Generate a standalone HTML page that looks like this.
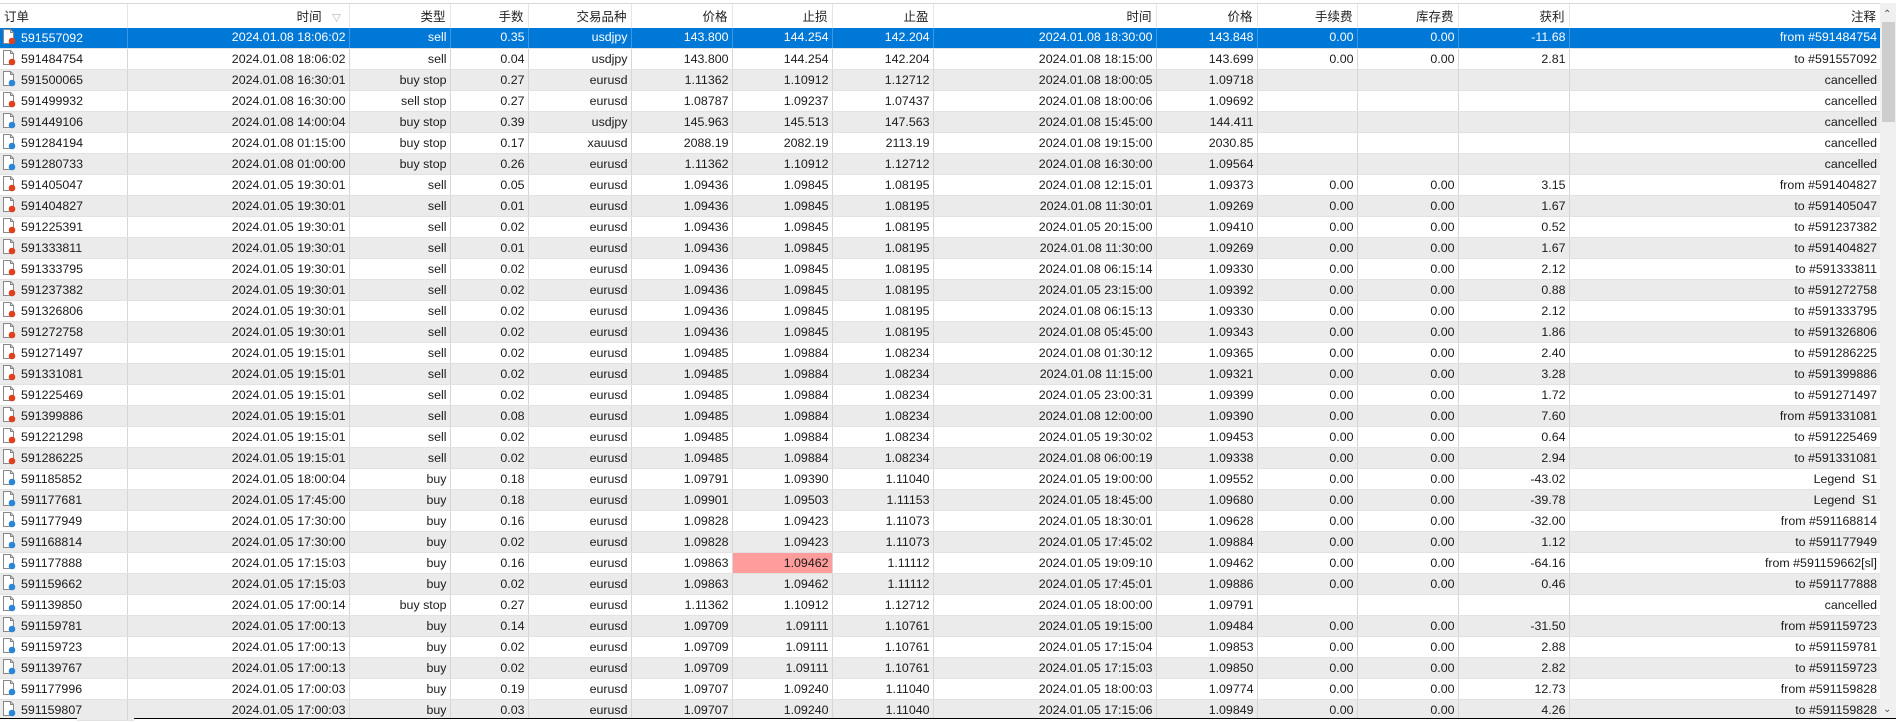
<!DOCTYPE html>
<html><head><meta charset="utf-8">
<style>
*{margin:0;padding:0;box-sizing:border-box}
body{width:1896px;height:722px;overflow:hidden;background:#fff;font-family:"Liberation Sans","Noto Sans CJK SC",sans-serif;font-size:12.4px;color:#1a1a1a;position:relative}
table{position:absolute;left:0;top:3px;border-collapse:collapse;table-layout:fixed;width:1880px}
th{height:24px;font-weight:normal;font-size:12.5px;text-align:right;padding:0 4px;border-left:1px solid #e6e6e6;border-top:1px solid #d8d8d8;color:#222;white-space:nowrap}
th:first-child{text-align:left;border-left:none;padding-left:4px}
td{height:21px;line-height:19px;text-align:right;padding:0 3px;border-left:1px solid #d6d6d6;border-bottom:1px solid #e2e2e2;white-space:nowrap;overflow:hidden}
td:first-child{text-align:left;border-left:none;padding-left:1px}
tr:nth-child(even) td{background:#ebebeb}
tr.sel td{background:#0078d7;color:#fff;border-left-color:#3d96e0}
td.pk{background:#ff9c9c!important}
.ic{display:inline-block;width:16px;height:17px;vertical-align:-3px;margin-right:4px}
.sb{position:absolute;left:1880px;top:3px;width:16px;height:716px;background:#f0f0f0}
.th{position:absolute;left:1882px;top:22px;width:13px;height:100px;background:#cdcdcd}
.bot{position:absolute;top:718px;height:4px;border-top:1px solid #000;background:#fff}
</style></head><body>
<svg width="0" height="0" style="position:absolute"><defs>
<symbol id="r" viewBox="0 0 16 17"><path d="M2.5 1.5h7l3 3v11h-10z" fill="#fff" stroke="#888"/><path d="M9.5 1.5v3h3" fill="none" stroke="#888"/><circle cx="11" cy="13" r="3.3" fill="#e0401c"/></symbol>
<symbol id="b" viewBox="0 0 16 17"><path d="M2.5 1.5h7l3 3v11h-10z" fill="#fff" stroke="#888"/><path d="M9.5 1.5v3h3" fill="none" stroke="#888"/><circle cx="11" cy="13" r="3.3" fill="#2a86d8"/></symbol>
</defs></svg>
<table>
<colgroup><col style="width:127px"><col style="width:222px"><col style="width:101px"><col style="width:78px"><col style="width:103px"><col style="width:101px"><col style="width:100px"><col style="width:101px"><col style="width:223px"><col style="width:101px"><col style="width:100px"><col style="width:101px"><col style="width:111px"><col style="width:311px"></colgroup>
<tr><th>订单</th><th>时间 &nbsp; <span style="font-size:9px;color:#888">▽</span>&nbsp;</th><th>类型</th><th>手数</th><th>交易品种</th><th>价格</th><th>止损</th><th>止盈</th><th>时间</th><th>价格</th><th>手续费</th><th>库存费</th><th>获利</th><th>注释</th></tr>
<tr class="sel"><td><svg class="ic"><use href="#r"/></svg>591557092</td><td>2024.01.08 18:06:02</td><td>sell</td><td>0.35</td><td>usdjpy</td><td>143.800</td><td>144.254</td><td>142.204</td><td>2024.01.08 18:30:00</td><td>143.848</td><td>0.00</td><td>0.00</td><td>-11.68</td><td>from #591484754</td></tr>
<tr><td><svg class="ic"><use href="#r"/></svg>591484754</td><td>2024.01.08 18:06:02</td><td>sell</td><td>0.04</td><td>usdjpy</td><td>143.800</td><td>144.254</td><td>142.204</td><td>2024.01.08 18:15:00</td><td>143.699</td><td>0.00</td><td>0.00</td><td>2.81</td><td>to #591557092</td></tr>
<tr><td><svg class="ic"><use href="#b"/></svg>591500065</td><td>2024.01.08 16:30:01</td><td>buy stop</td><td>0.27</td><td>eurusd</td><td>1.11362</td><td>1.10912</td><td>1.12712</td><td>2024.01.08 18:00:05</td><td>1.09718</td><td></td><td></td><td></td><td>cancelled</td></tr>
<tr><td><svg class="ic"><use href="#r"/></svg>591499932</td><td>2024.01.08 16:30:00</td><td>sell stop</td><td>0.27</td><td>eurusd</td><td>1.08787</td><td>1.09237</td><td>1.07437</td><td>2024.01.08 18:00:06</td><td>1.09692</td><td></td><td></td><td></td><td>cancelled</td></tr>
<tr><td><svg class="ic"><use href="#b"/></svg>591449106</td><td>2024.01.08 14:00:04</td><td>buy stop</td><td>0.39</td><td>usdjpy</td><td>145.963</td><td>145.513</td><td>147.563</td><td>2024.01.08 15:45:00</td><td>144.411</td><td></td><td></td><td></td><td>cancelled</td></tr>
<tr><td><svg class="ic"><use href="#b"/></svg>591284194</td><td>2024.01.08 01:15:00</td><td>buy stop</td><td>0.17</td><td>xauusd</td><td>2088.19</td><td>2082.19</td><td>2113.19</td><td>2024.01.08 19:15:00</td><td>2030.85</td><td></td><td></td><td></td><td>cancelled</td></tr>
<tr><td><svg class="ic"><use href="#b"/></svg>591280733</td><td>2024.01.08 01:00:00</td><td>buy stop</td><td>0.26</td><td>eurusd</td><td>1.11362</td><td>1.10912</td><td>1.12712</td><td>2024.01.08 16:30:00</td><td>1.09564</td><td></td><td></td><td></td><td>cancelled</td></tr>
<tr><td><svg class="ic"><use href="#r"/></svg>591405047</td><td>2024.01.05 19:30:01</td><td>sell</td><td>0.05</td><td>eurusd</td><td>1.09436</td><td>1.09845</td><td>1.08195</td><td>2024.01.08 12:15:01</td><td>1.09373</td><td>0.00</td><td>0.00</td><td>3.15</td><td>from #591404827</td></tr>
<tr><td><svg class="ic"><use href="#r"/></svg>591404827</td><td>2024.01.05 19:30:01</td><td>sell</td><td>0.01</td><td>eurusd</td><td>1.09436</td><td>1.09845</td><td>1.08195</td><td>2024.01.08 11:30:01</td><td>1.09269</td><td>0.00</td><td>0.00</td><td>1.67</td><td>to #591405047</td></tr>
<tr><td><svg class="ic"><use href="#r"/></svg>591225391</td><td>2024.01.05 19:30:01</td><td>sell</td><td>0.02</td><td>eurusd</td><td>1.09436</td><td>1.09845</td><td>1.08195</td><td>2024.01.05 20:15:00</td><td>1.09410</td><td>0.00</td><td>0.00</td><td>0.52</td><td>to #591237382</td></tr>
<tr><td><svg class="ic"><use href="#r"/></svg>591333811</td><td>2024.01.05 19:30:01</td><td>sell</td><td>0.01</td><td>eurusd</td><td>1.09436</td><td>1.09845</td><td>1.08195</td><td>2024.01.08 11:30:00</td><td>1.09269</td><td>0.00</td><td>0.00</td><td>1.67</td><td>to #591404827</td></tr>
<tr><td><svg class="ic"><use href="#r"/></svg>591333795</td><td>2024.01.05 19:30:01</td><td>sell</td><td>0.02</td><td>eurusd</td><td>1.09436</td><td>1.09845</td><td>1.08195</td><td>2024.01.08 06:15:14</td><td>1.09330</td><td>0.00</td><td>0.00</td><td>2.12</td><td>to #591333811</td></tr>
<tr><td><svg class="ic"><use href="#r"/></svg>591237382</td><td>2024.01.05 19:30:01</td><td>sell</td><td>0.02</td><td>eurusd</td><td>1.09436</td><td>1.09845</td><td>1.08195</td><td>2024.01.05 23:15:00</td><td>1.09392</td><td>0.00</td><td>0.00</td><td>0.88</td><td>to #591272758</td></tr>
<tr><td><svg class="ic"><use href="#r"/></svg>591326806</td><td>2024.01.05 19:30:01</td><td>sell</td><td>0.02</td><td>eurusd</td><td>1.09436</td><td>1.09845</td><td>1.08195</td><td>2024.01.08 06:15:13</td><td>1.09330</td><td>0.00</td><td>0.00</td><td>2.12</td><td>to #591333795</td></tr>
<tr><td><svg class="ic"><use href="#r"/></svg>591272758</td><td>2024.01.05 19:30:01</td><td>sell</td><td>0.02</td><td>eurusd</td><td>1.09436</td><td>1.09845</td><td>1.08195</td><td>2024.01.08 05:45:00</td><td>1.09343</td><td>0.00</td><td>0.00</td><td>1.86</td><td>to #591326806</td></tr>
<tr><td><svg class="ic"><use href="#r"/></svg>591271497</td><td>2024.01.05 19:15:01</td><td>sell</td><td>0.02</td><td>eurusd</td><td>1.09485</td><td>1.09884</td><td>1.08234</td><td>2024.01.08 01:30:12</td><td>1.09365</td><td>0.00</td><td>0.00</td><td>2.40</td><td>to #591286225</td></tr>
<tr><td><svg class="ic"><use href="#r"/></svg>591331081</td><td>2024.01.05 19:15:01</td><td>sell</td><td>0.02</td><td>eurusd</td><td>1.09485</td><td>1.09884</td><td>1.08234</td><td>2024.01.08 11:15:00</td><td>1.09321</td><td>0.00</td><td>0.00</td><td>3.28</td><td>to #591399886</td></tr>
<tr><td><svg class="ic"><use href="#r"/></svg>591225469</td><td>2024.01.05 19:15:01</td><td>sell</td><td>0.02</td><td>eurusd</td><td>1.09485</td><td>1.09884</td><td>1.08234</td><td>2024.01.05 23:00:31</td><td>1.09399</td><td>0.00</td><td>0.00</td><td>1.72</td><td>to #591271497</td></tr>
<tr><td><svg class="ic"><use href="#r"/></svg>591399886</td><td>2024.01.05 19:15:01</td><td>sell</td><td>0.08</td><td>eurusd</td><td>1.09485</td><td>1.09884</td><td>1.08234</td><td>2024.01.08 12:00:00</td><td>1.09390</td><td>0.00</td><td>0.00</td><td>7.60</td><td>from #591331081</td></tr>
<tr><td><svg class="ic"><use href="#r"/></svg>591221298</td><td>2024.01.05 19:15:01</td><td>sell</td><td>0.02</td><td>eurusd</td><td>1.09485</td><td>1.09884</td><td>1.08234</td><td>2024.01.05 19:30:02</td><td>1.09453</td><td>0.00</td><td>0.00</td><td>0.64</td><td>to #591225469</td></tr>
<tr><td><svg class="ic"><use href="#r"/></svg>591286225</td><td>2024.01.05 19:15:01</td><td>sell</td><td>0.02</td><td>eurusd</td><td>1.09485</td><td>1.09884</td><td>1.08234</td><td>2024.01.08 06:00:19</td><td>1.09338</td><td>0.00</td><td>0.00</td><td>2.94</td><td>to #591331081</td></tr>
<tr><td><svg class="ic"><use href="#b"/></svg>591185852</td><td>2024.01.05 18:00:04</td><td>buy</td><td>0.18</td><td>eurusd</td><td>1.09791</td><td>1.09390</td><td>1.11040</td><td>2024.01.05 19:00:00</td><td>1.09552</td><td>0.00</td><td>0.00</td><td>-43.02</td><td>Legend &nbsp;S1</td></tr>
<tr><td><svg class="ic"><use href="#b"/></svg>591177681</td><td>2024.01.05 17:45:00</td><td>buy</td><td>0.18</td><td>eurusd</td><td>1.09901</td><td>1.09503</td><td>1.11153</td><td>2024.01.05 18:45:00</td><td>1.09680</td><td>0.00</td><td>0.00</td><td>-39.78</td><td>Legend &nbsp;S1</td></tr>
<tr><td><svg class="ic"><use href="#b"/></svg>591177949</td><td>2024.01.05 17:30:00</td><td>buy</td><td>0.16</td><td>eurusd</td><td>1.09828</td><td>1.09423</td><td>1.11073</td><td>2024.01.05 18:30:01</td><td>1.09628</td><td>0.00</td><td>0.00</td><td>-32.00</td><td>from #591168814</td></tr>
<tr><td><svg class="ic"><use href="#b"/></svg>591168814</td><td>2024.01.05 17:30:00</td><td>buy</td><td>0.02</td><td>eurusd</td><td>1.09828</td><td>1.09423</td><td>1.11073</td><td>2024.01.05 17:45:02</td><td>1.09884</td><td>0.00</td><td>0.00</td><td>1.12</td><td>to #591177949</td></tr>
<tr><td><svg class="ic"><use href="#b"/></svg>591177888</td><td>2024.01.05 17:15:03</td><td>buy</td><td>0.16</td><td>eurusd</td><td>1.09863</td><td class="pk">1.09462</td><td>1.11112</td><td>2024.01.05 19:09:10</td><td>1.09462</td><td>0.00</td><td>0.00</td><td>-64.16</td><td>from #591159662[sl]</td></tr>
<tr><td><svg class="ic"><use href="#b"/></svg>591159662</td><td>2024.01.05 17:15:03</td><td>buy</td><td>0.02</td><td>eurusd</td><td>1.09863</td><td>1.09462</td><td>1.11112</td><td>2024.01.05 17:45:01</td><td>1.09886</td><td>0.00</td><td>0.00</td><td>0.46</td><td>to #591177888</td></tr>
<tr><td><svg class="ic"><use href="#b"/></svg>591139850</td><td>2024.01.05 17:00:14</td><td>buy stop</td><td>0.27</td><td>eurusd</td><td>1.11362</td><td>1.10912</td><td>1.12712</td><td>2024.01.05 18:00:00</td><td>1.09791</td><td></td><td></td><td></td><td>cancelled</td></tr>
<tr><td><svg class="ic"><use href="#b"/></svg>591159781</td><td>2024.01.05 17:00:13</td><td>buy</td><td>0.14</td><td>eurusd</td><td>1.09709</td><td>1.09111</td><td>1.10761</td><td>2024.01.05 19:15:00</td><td>1.09484</td><td>0.00</td><td>0.00</td><td>-31.50</td><td>from #591159723</td></tr>
<tr><td><svg class="ic"><use href="#b"/></svg>591159723</td><td>2024.01.05 17:00:13</td><td>buy</td><td>0.02</td><td>eurusd</td><td>1.09709</td><td>1.09111</td><td>1.10761</td><td>2024.01.05 17:15:04</td><td>1.09853</td><td>0.00</td><td>0.00</td><td>2.88</td><td>to #591159781</td></tr>
<tr><td><svg class="ic"><use href="#b"/></svg>591139767</td><td>2024.01.05 17:00:13</td><td>buy</td><td>0.02</td><td>eurusd</td><td>1.09709</td><td>1.09111</td><td>1.10761</td><td>2024.01.05 17:15:03</td><td>1.09850</td><td>0.00</td><td>0.00</td><td>2.82</td><td>to #591159723</td></tr>
<tr><td><svg class="ic"><use href="#b"/></svg>591177996</td><td>2024.01.05 17:00:03</td><td>buy</td><td>0.19</td><td>eurusd</td><td>1.09707</td><td>1.09240</td><td>1.11040</td><td>2024.01.05 18:00:03</td><td>1.09774</td><td>0.00</td><td>0.00</td><td>12.73</td><td>from #591159828</td></tr>
<tr><td><svg class="ic"><use href="#b"/></svg>591159807</td><td>2024.01.05 17:00:03</td><td>buy</td><td>0.03</td><td>eurusd</td><td>1.09707</td><td>1.09240</td><td>1.11040</td><td>2024.01.05 17:15:06</td><td>1.09849</td><td>0.00</td><td>0.00</td><td>4.26</td><td>to #591159828</td></tr>
</table>
<div class="sb"><div style="position:absolute;left:3px;top:6px;font-size:10px;color:#555">&#8963;</div><div style="position:absolute;left:3px;bottom:4px;font-size:10px;color:#555">&#8964;</div></div>
<div class="th"></div>
<div class="bot" style="left:0;width:77px"></div>
<div class="bot" style="left:134px;width:1762px"></div>
</body></html>
